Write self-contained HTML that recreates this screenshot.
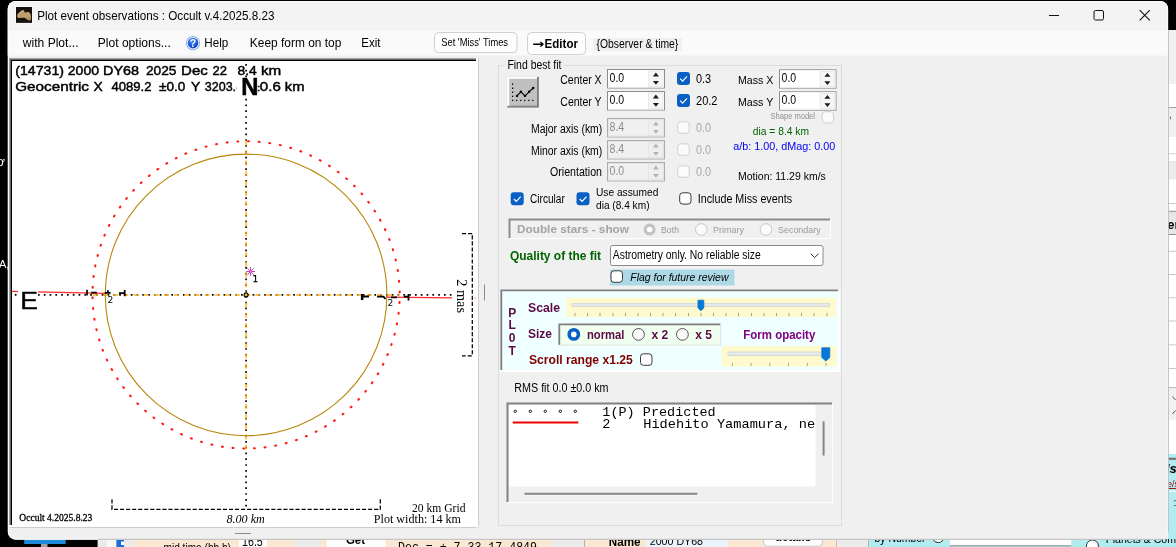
<!DOCTYPE html>
<html lang="en"><head><meta charset="utf-8"><title>Plot event observations : Occult v.4.2025.8.23</title>
<style>html,body{margin:0;padding:0;background:#000;overflow:hidden}svg{display:block;position:absolute;left:0;top:0;will-change:transform}text{white-space:pre}</style>
</head><body>
<svg width="1176" height="547" viewBox="0 0 1176 547">
<rect x="0" y="0" width="1176" height="547" fill="#000" />
<rect x="1160" y="30" width="16" height="517" fill="#f0f0f0" />
<rect x="1168" y="84" width="8" height="23.5" fill="#fff" />
<line x1="1168" y1="107.5" x2="1176" y2="107.5" stroke="#a0a0a0" stroke-width="1" />
<text x="1169" y="118" font-family="Liberation Sans, Arial, sans-serif" font-size="10" fill="#444" >,</text>
<rect x="1168" y="137" width="8" height="25" fill="#fff" />
<line x1="1168" y1="153.8" x2="1176" y2="153.8" stroke="#d0d0d0" stroke-width="1" />
<line x1="1168" y1="162" x2="1176" y2="162" stroke="#d0d0d0" stroke-width="1" />
<rect x="1168" y="162.5" width="8" height="17" fill="#ececec" />
<rect x="1168" y="179.5" width="8" height="32" fill="#fff" />
<line x1="1168" y1="203.5" x2="1176" y2="203.5" stroke="#c8c8c8" stroke-width="1" />
<rect x="1168" y="211" width="8" height="23.5" fill="#e6e6e6" />
<line x1="1168" y1="211.3" x2="1176" y2="211.3" stroke="#909090" stroke-width="1" />
<line x1="1168" y1="234.5" x2="1176" y2="234.5" stroke="#909090" stroke-width="1" />
<text x="1167.3" y="229" font-family="Liberation Sans, Arial, sans-serif" font-size="13" fill="#000" font-weight="bold" >er</text>
<rect x="1168" y="235" width="8" height="153" fill="#fff" />
<line x1="1168" y1="251.3" x2="1176" y2="251.3" stroke="#c8c8c8" stroke-width="1" />
<line x1="1168" y1="274.5" x2="1176" y2="274.5" stroke="#c8c8c8" stroke-width="1" />
<line x1="1168" y1="297.8" x2="1176" y2="297.8" stroke="#c8c8c8" stroke-width="1" />
<line x1="1168" y1="321" x2="1176" y2="321" stroke="#c8c8c8" stroke-width="1" />
<line x1="1168" y1="344.8" x2="1176" y2="344.8" stroke="#c8c8c8" stroke-width="1" />
<line x1="1168" y1="368.5" x2="1176" y2="368.5" stroke="#c8c8c8" stroke-width="1" />
<line x1="1168" y1="387.8" x2="1176" y2="387.8" stroke="#a0a0a0" stroke-width="1" />
<rect x="1168" y="388.3" width="8" height="32" fill="#f2f2f2" />
<path d="M1172.5 396.5 L1175.5 400" fill="none" stroke="#555" stroke-width="1" />
<path d="M1172.5 414 L1175.5 410.5" fill="none" stroke="#555" stroke-width="1" />
<rect x="1168" y="420" width="8" height="34" fill="#fff" />
<rect x="1168" y="454" width="8" height="93" fill="#b0ecf0" />
<line x1="1168" y1="458.8" x2="1176" y2="458.8" stroke="#707070" stroke-width="2" />
<line x1="1168" y1="491.3" x2="1176" y2="491.3" stroke="#fff" stroke-width="1" />
<text x="1166" y="473" font-family="Liberation Sans, Arial, sans-serif" font-size="13" fill="#000" font-weight="bold" font-style="italic" >ls</text>
<text x="1167" y="487" font-family="Liberation Sans, Arial, sans-serif" font-size="9" fill="#a00000" text-decoration="underline">e/s</text>
<text x="1173.5" y="506" font-family="Liberation Sans, Arial, sans-serif" font-size="10" fill="#000" >:</text>
<text x="-3" y="166" font-family="Liberation Sans, Arial, sans-serif" font-size="12" fill="#fff" >ơ</text>
<text x="-1" y="268" font-family="Liberation Sans, Arial, sans-serif" font-size="11" fill="#fff" >A,</text>
<rect x="0" y="539" width="98" height="9" fill="#000" />
<rect x="24.2" y="539" width="41.5" height="5" fill="#1f8ad8" />
<rect x="41" y="544" width="6.5" height="3" fill="#9aa0a6" />
<rect x="97.6" y="539" width="37" height="9" fill="#ebebeb" />
<rect x="107" y="539" width="9.5" height="9" fill="#f8f8f8" />
<rect x="116.4" y="539" width="7.6" height="9" fill="#1a6fd8" />
<rect x="121" y="541.5" width="3" height="3.5" fill="#fff" />
<rect x="133.9" y="539" width="418.1" height="9" fill="#fbe8d2" />
<rect x="238.8" y="539" width="28.2" height="9" fill="#fff" />
<rect x="294" y="539" width="25.8" height="9" fill="#ebebeb" />
<rect x="326.6" y="539" width="59" height="9" fill="#fdfdfd" />
<rect x="552" y="539" width="32.4" height="9" fill="#ebebeb" />
<rect x="584.4" y="539" width="252" height="9" fill="#fbe8d2" />
<rect x="646.5" y="539" width="81.8" height="9" fill="#eaf4fd" />
<rect x="763.5" y="535" width="59.2" height="11.2" fill="#fdfdfd" rx="4" stroke="#c8c8c8" stroke-width="1" />
<rect x="836.3" y="539" width="32.3" height="9" fill="#ebebeb" />
<rect x="868.5" y="539" width="308" height="9" fill="#b0ecf0" />
<rect x="949.8" y="539" width="121.4" height="6.5" fill="#fff" />
<line x1="949.8" y1="545.8" x2="1071.2" y2="545.8" stroke="#8a8a8a" stroke-width="1" />
<circle cx="1092.4" cy="546" r="6" fill="#fff" stroke="#333"/>
<circle cx="938.2" cy="536.8" r="5.8" fill="#fff" stroke="#333"/>
<clipPath id="cb"><rect x="0" y="539" width="1176" height="8"/></clipPath><g clip-path="url(#cb)">
<text x="163.5" y="551.6" font-family="Liberation Sans, Arial, sans-serif" font-size="12" fill="#000" textLength="67.5" lengthAdjust="spacingAndGlyphs" >mid time (hh.h)</text>
<text x="242" y="545.7" font-family="Liberation Sans, Arial, sans-serif" font-size="12" fill="#000" textLength="20.8" lengthAdjust="spacingAndGlyphs" >16.5</text>
<text x="346" y="543.6" font-family="Liberation Sans, Arial, sans-serif" font-size="13" fill="#000" font-weight="bold" textLength="19" lengthAdjust="spacingAndGlyphs" >Get</text>
<text x="398" y="550.6" font-family="Liberation Mono, Courier New, monospace" font-size="12.5" fill="#000" textLength="139" lengthAdjust="spacingAndGlyphs" >Dec = + 7 33 17.4849</text>
<text x="608.8" y="545.6" font-family="Liberation Sans, Arial, sans-serif" font-size="12" fill="#000" font-weight="bold" textLength="31.8" lengthAdjust="spacingAndGlyphs" >Name</text>
<text x="649.8" y="545.4" font-family="Liberation Sans, Arial, sans-serif" font-size="11.5" fill="#000" textLength="53.2" lengthAdjust="spacingAndGlyphs" >2000 DY68</text>
<text x="775" y="540.5" font-family="Liberation Sans, Arial, sans-serif" font-size="12" fill="#000" font-weight="bold" textLength="36" lengthAdjust="spacingAndGlyphs" >details</text>
<text x="874.5" y="541.6" font-family="Liberation Sans, Arial, sans-serif" font-size="13" fill="#000" textLength="51.0" lengthAdjust="spacingAndGlyphs" >by Number</text>
<text x="1105.7" y="543" font-family="Liberation Sans, Arial, sans-serif" font-size="11.5" fill="#000" textLength="84.36" lengthAdjust="spacingAndGlyphs" >Planets &amp; Comets</text>
<text x="953.5" y="539.6" font-family="Liberation Sans, Arial, sans-serif" font-size="9" fill="#000" textLength="18.5" lengthAdjust="spacingAndGlyphs" >1234</text>
</g>
<clipPath id="win"><rect x="7.7" y="1" width="1160.4" height="538.7" rx="8"/></clipPath>
<g clip-path="url(#win)">
<rect x="7" y="0" width="1162" height="540" fill="#f0f0f0" />
<rect x="7" y="0" width="1162" height="31" fill="#f3f3f3" />
<rect x="7" y="30.5" width="1162" height="25" fill="#fafafa" />
</g>
<rect x="8.5" y="1.5" width="1159" height="537.8" fill="none" rx="7.5" stroke="#ffffff" stroke-width="1" opacity="0.75"/>
<line x1="98" y1="539.4" x2="1162" y2="539.4" stroke="#c4c4c4" stroke-width="1.2" />
<line x1="1168.4" y1="30" x2="1168.4" y2="532" stroke="#c0c0c0" stroke-width="1" />
<rect x="16" y="7" width="16" height="16" fill="#15120e" />
<rect x="15.5" y="6.5" width="17" height="16.7" fill="none" stroke="#fff" stroke-width="1" opacity="0.4"/>
<path d="M17 16.2 C17.3 14.5 18 13.6 18.6 13.1 L20.8 11.3 C21.5 10.6 22 10.3 22.6 10.1 C23.3 10 23.7 10.2 23.9 10.6 L24.7 12.3 C25.3 12.6 26 12.5 26.5 12.3 C27.2 12 27.8 11.9 28.3 12 C29.2 12.3 29.7 12.8 30 13.3 C30.6 14 30.9 14.9 30.9 15.7 L30.9 19.2 C30.6 20 30.1 20.3 29.5 20.3 C28.7 20.3 28 20.1 27.4 19.7 L25.2 18.1 C24.5 17.8 23.7 17.7 23 17.7 L20.3 17.9 C19.5 18 18.7 17.9 18.1 17.7 C17.4 17.3 17 16.8 17 16.2 Z" fill="#bf9d6e" />
<path d="M25.4 18.2 L27.4 19.7 C28 20.1 28.7 20.3 29.5 20.3 C30.1 20.3 30.6 20 30.9 19.2 L30.9 16.5 C30 18 28 18.5 25.4 18.2 Z" fill="#a98659" />
<path d="M18.5 14.2 C20 12.5 21.5 11.3 23 11" fill="none" stroke="#d8b88c" stroke-width="0.9" />
<text x="37.2" y="20" font-family="Liberation Sans, Arial, sans-serif" font-size="12.2" fill="#000" textLength="237.3" lengthAdjust="spacingAndGlyphs" >Plot event observations : Occult v.4.2025.8.23</text>
<line x1="1049" y1="15.5" x2="1059" y2="15.5" stroke="#111" stroke-width="1" />
<rect x="1094" y="10.5" width="9.5" height="9.5" fill="none" rx="1.5" stroke="#111" stroke-width="1" />
<path d="M1139.7 10.2 L1149.8 20.3 M1149.8 10.2 L1139.7 20.3" fill="none" stroke="#111" stroke-width="1.1" />
<text x="22.8" y="47" font-family="Liberation Sans, Arial, sans-serif" font-size="12.2" fill="#000" textLength="55.7" lengthAdjust="spacingAndGlyphs" >with Plot...</text>
<text x="97.8" y="47" font-family="Liberation Sans, Arial, sans-serif" font-size="12.2" fill="#000" textLength="73.0" lengthAdjust="spacingAndGlyphs" >Plot options...</text>
<defs><radialGradient id="hg" cx="0.4" cy="0.3" r="0.8"><stop offset="0" stop-color="#4f8cf0"/><stop offset="0.55" stop-color="#1c5cd8"/><stop offset="1" stop-color="#0a36a8"/></radialGradient></defs>
<circle cx="193" cy="43.1" r="6.6" fill="#fff" stroke="#8eb0ee" stroke-width="1.1"/>
<circle cx="193" cy="43.1" r="5.3" fill="url(#hg)"/>
<text x="193" y="47" font-family="Liberation Sans, Arial, sans-serif" font-size="10.5" fill="#fff" font-weight="bold" text-anchor="middle">?</text>
<text x="204.3" y="47" font-family="Liberation Sans, Arial, sans-serif" font-size="12.2" fill="#000" textLength="24.0" lengthAdjust="spacingAndGlyphs" >Help</text>
<text x="249.8" y="47" font-family="Liberation Sans, Arial, sans-serif" font-size="12.2" fill="#000" textLength="91.5" lengthAdjust="spacingAndGlyphs" >Keep form on top</text>
<text x="361.3" y="47" font-family="Liberation Sans, Arial, sans-serif" font-size="12.2" fill="#000" textLength="19.2" lengthAdjust="spacingAndGlyphs" >Exit</text>
<rect x="434.5" y="32.5" width="82.5" height="20" fill="#fdfdfd" rx="4" stroke="#d0d0d0" stroke-width="1" />
<text x="441.3" y="45.8" font-family="Liberation Sans, Arial, sans-serif" font-size="10" fill="#000" textLength="66.7" lengthAdjust="spacingAndGlyphs" >Set 'Miss' Times</text>
<rect x="527.5" y="32.5" width="58" height="22" fill="#fdfdfd" rx="4" stroke="#d0d0d0" stroke-width="1" />
<text x="532.3" y="47.6" font-family="DejaVu Sans, Liberation Sans, sans-serif" font-size="12.5" fill="#000" font-weight="bold" textLength="12.0" lengthAdjust="spacingAndGlyphs" >→</text>
<text x="544.6" y="47.6" font-family="Liberation Sans, Arial, sans-serif" font-size="12.6" fill="#000" font-weight="bold" textLength="33.4" lengthAdjust="spacingAndGlyphs" >Editor</text>
<rect x="593" y="38" width="89" height="13" fill="#f0f0f0" />
<text x="596.5" y="48" font-family="Liberation Sans, Arial, sans-serif" font-size="12" fill="#000" textLength="81.8" lengthAdjust="spacingAndGlyphs" >{Observer &amp; time}</text>
<rect x="9" y="58" width="469.5" height="469.5" fill="#a0a0a0" />
<rect x="10" y="59" width="468.5" height="468.5" fill="#696969" />
<rect x="11" y="60" width="466.5" height="466.5" fill="#000" />
<rect x="476" y="58" width="2.5" height="469.5" fill="#fff" />
<rect x="9" y="525" width="469.5" height="2.5" fill="#fff" />
<rect x="477" y="58" width="1" height="469" fill="#e3e3e3" opacity="0"/>
<rect x="12" y="61" width="464.3" height="464.2" fill="#fff" />
<clipPath id="pp"><rect x="12" y="61" width="464.3" height="464.2"/></clipPath>
<g clip-path="url(#pp)">
<line x1="8.98" y1="294.9" x2="452" y2="294.9" stroke="#000" stroke-width="1.7" stroke-dasharray="1.7 4.1" />
<line x1="246.1" y1="58.15" x2="246.1" y2="509" stroke="#000" stroke-width="1.7" stroke-dasharray="1.7 4.1" />
<line x1="92.9" y1="294.9" x2="399" y2="294.9" stroke="#ffae1a" stroke-width="2" stroke-dasharray="5 5.15" opacity="0.72"/>
<line x1="246.1" y1="140.2" x2="246.1" y2="449.5" stroke="#ffae1a" stroke-width="2" stroke-dasharray="5 5.15" opacity="0.72"/>
<circle cx="246.1" cy="294.9" r="140.8" fill="none" stroke="#b8860b" stroke-width="1.1"/>
<circle cx="246.1" cy="294.9" r="153.6" fill="none" stroke="#ff1a1a" stroke-width="2.1" stroke-dasharray="0.9 9.82" stroke-linecap="round" transform="rotate(-89.3 246.1 294.9)"/>
<line x1="11" y1="291.4" x2="105.5" y2="293.4" stroke="#ff2a2a" stroke-width="1.2" />
<line x1="386" y1="297.2" x2="452" y2="297.8" stroke="#ff2a2a" stroke-width="1.3" />
<line x1="474" y1="298" x2="477" y2="298" stroke="#ff9a9a" stroke-width="1" />
<path d="M87 289.8 V295.6 M91.2 292.7 H96.8 M104.8 292.9 H110.6 M107.9 290.3 V293 M119 293.1 H125 M124.7 290.1 V296.2" fill="none" stroke="#000" stroke-width="1.7" />
<line x1="85.4" y1="293.5" x2="85.4" y2="295.6" stroke="#444" stroke-width="1" />
<path d="M362.4 294 V300 M362.3 296.5 H369 M377 296.7 H383.5 L385.5 299 M391 297.3 H397 M408.5 294 V300.6 M403.8 296.6 H408.5" fill="none" stroke="#000" stroke-width="1.8" />
<line x1="362" y1="294" x2="362" y2="300" stroke="#000" stroke-width="2.2" />
<rect x="18" y="288" width="20" height="24" fill="#fff" />
<text x="20.3" y="309" font-family="Liberation Sans, Arial, sans-serif" font-size="23.6" fill="#000" textLength="17.7" lengthAdjust="spacingAndGlyphs" stroke="#000" stroke-width="0.4">E</text>
<text x="107.6" y="302.8" font-family="DejaVu Sans, Liberation Sans, sans-serif" font-size="8.8" fill="#000" textLength="5.8" lengthAdjust="spacingAndGlyphs" >2</text>
<text x="387.4" y="306.4" font-family="DejaVu Sans, Liberation Sans, sans-serif" font-size="8.8" fill="#000" textLength="5.8" lengthAdjust="spacingAndGlyphs" >2</text>
<text x="252.6" y="282" font-family="DejaVu Sans, Liberation Sans, sans-serif" font-size="8.8" fill="#000" textLength="5.8" lengthAdjust="spacingAndGlyphs" stroke="#000" stroke-width="0.25">1</text>
<circle cx="246.1" cy="294.9" r="2" fill="#f5b743" stroke="#000" stroke-width="1.1"/>
<path d="M246.2 271.5 H255 M250.6 267 V276 M247.4 268.3 L253.8 274.7 M253.8 268.3 L247.4 274.7" fill="none" stroke="#b846b8" stroke-width="1.0" />
<circle cx="250.6" cy="271.5" r="1.5" fill="#f25fc0"/>
<text x="15.2" y="75" font-family="Liberation Sans, Arial, sans-serif" font-size="13.3" fill="#000" textLength="48.8" lengthAdjust="spacingAndGlyphs" stroke="#000" stroke-width="0.45">(14731)</text>
<text x="67.8" y="75" font-family="Liberation Sans, Arial, sans-serif" font-size="13.3" fill="#000" textLength="31.2" lengthAdjust="spacingAndGlyphs" stroke="#000" stroke-width="0.45">2000</text>
<text x="103" y="75" font-family="Liberation Sans, Arial, sans-serif" font-size="13.3" fill="#000" textLength="36" lengthAdjust="spacingAndGlyphs" stroke="#000" stroke-width="0.45">DY68</text>
<text x="146" y="75" font-family="Liberation Sans, Arial, sans-serif" font-size="13.3" fill="#000" textLength="30.5" lengthAdjust="spacingAndGlyphs" stroke="#000" stroke-width="0.45">2025</text>
<text x="181" y="75" font-family="Liberation Sans, Arial, sans-serif" font-size="13.3" fill="#000" textLength="26.8" lengthAdjust="spacingAndGlyphs" stroke="#000" stroke-width="0.45">Dec</text>
<text x="212.5" y="75" font-family="Liberation Sans, Arial, sans-serif" font-size="13.3" fill="#000" textLength="14.5" lengthAdjust="spacingAndGlyphs" stroke="#000" stroke-width="0.45">22</text>
<text x="237.5" y="75" font-family="Liberation Sans, Arial, sans-serif" font-size="13.3" fill="#000" textLength="19.3" lengthAdjust="spacingAndGlyphs" stroke="#000" stroke-width="0.45">8.4</text>
<text x="261" y="75" font-family="Liberation Sans, Arial, sans-serif" font-size="13.3" fill="#000" textLength="20.3" lengthAdjust="spacingAndGlyphs" stroke="#000" stroke-width="0.45">km</text>
<text x="15.2" y="90.5" font-family="Liberation Sans, Arial, sans-serif" font-size="13.3" fill="#000" textLength="73.8" lengthAdjust="spacingAndGlyphs" stroke="#000" stroke-width="0.45">Geocentric</text>
<text x="93.6" y="90.5" font-family="Liberation Sans, Arial, sans-serif" font-size="13.3" fill="#000" textLength="9.2" lengthAdjust="spacingAndGlyphs" stroke="#000" stroke-width="0.45">X</text>
<text x="111.5" y="90.5" font-family="Liberation Sans, Arial, sans-serif" font-size="13.3" fill="#000" textLength="40.0" lengthAdjust="spacingAndGlyphs" stroke="#000" stroke-width="0.45">4089.2</text>
<text x="159" y="90.5" font-family="Liberation Sans, Arial, sans-serif" font-size="13.3" fill="#000" textLength="26.3" lengthAdjust="spacingAndGlyphs" stroke="#000" stroke-width="0.45">±0.0</text>
<text x="191" y="90.5" font-family="Liberation Sans, Arial, sans-serif" font-size="13.3" fill="#000" textLength="9.3" lengthAdjust="spacingAndGlyphs" stroke="#000" stroke-width="0.45">Y</text>
<text x="204.8" y="90.5" font-family="Liberation Sans, Arial, sans-serif" font-size="13.3" fill="#000" textLength="38.2" lengthAdjust="spacingAndGlyphs" stroke="#000" stroke-width="0.45">3203.4</text>
<text x="251.5" y="90.5" font-family="Liberation Sans, Arial, sans-serif" font-size="13.3" fill="#000" textLength="29.3" lengthAdjust="spacingAndGlyphs" stroke="#000" stroke-width="0.45">±0.6</text>
<text x="284.8" y="90.5" font-family="Liberation Sans, Arial, sans-serif" font-size="13.3" fill="#000" textLength="19.7" lengthAdjust="spacingAndGlyphs" stroke="#000" stroke-width="0.45">km</text>
<rect x="236.3" y="77.4" width="21.5" height="18" fill="#fff" />
<text x="241.2" y="94.6" font-family="Liberation Sans, Arial, sans-serif" font-size="23.2" fill="#000" font-weight="bold" textLength="17.2" lengthAdjust="spacingAndGlyphs" stroke="#000" stroke-width="0.5">N</text>
<rect x="454.5" y="277" width="14" height="38" fill="#fff" />
<path d="M462 233.5 H472.3 V355.8 H462" fill="none" stroke="#000" stroke-width="1.25" stroke-dasharray="4.1 1.95"/>
<g transform="translate(457.2,279.2) rotate(90)">
<text x="0" y="0" font-family="Liberation Serif, Times New Roman, serif" font-size="14" fill="#000" textLength="33.8" lengthAdjust="spacingAndGlyphs" >2 mas</text>
</g>
<path d="M112 499.3 V509.4 H380.3 V499.3" fill="none" stroke="#000" stroke-width="1.25" stroke-dasharray="4.1 1.95"/>
<text x="19.3" y="520.6" font-family="Liberation Serif, Times New Roman, serif" font-size="10" fill="#000" textLength="73.0" lengthAdjust="spacingAndGlyphs" stroke="#000" stroke-width="0.3">Occult 4.2025.8.23</text>
<text x="226.5" y="522.6" font-family="Liberation Serif, Times New Roman, serif" font-size="12.3" fill="#000" font-style="italic" textLength="38.3" lengthAdjust="spacingAndGlyphs" >8.00 km</text>
<text x="412" y="512.1" font-family="Liberation Serif, Times New Roman, serif" font-size="12.3" fill="#000" textLength="53.5" lengthAdjust="spacingAndGlyphs" >20 km Grid</text>
<text x="373.8" y="522.7" font-family="Liberation Serif, Times New Roman, serif" font-size="12.3" fill="#000" textLength="87.2" lengthAdjust="spacingAndGlyphs" >Plot width: 14 km</text>
</g>
<line x1="484.5" y1="284.5" x2="484.5" y2="300.5" stroke="#8a8a8a" stroke-width="1" />
<line x1="235" y1="533.5" x2="251" y2="533.5" stroke="#8a8a8a" stroke-width="1" />
<rect x="498.5" y="65.5" width="343.0" height="460.0" fill="none" stroke="#dcdcdc" stroke-width="1" />
<rect x="504" y="58" width="60" height="13" fill="#f0f0f0" />
<text x="507.4" y="68.8" font-family="Liberation Sans, Arial, sans-serif" font-size="12" fill="#000" textLength="54.1" lengthAdjust="spacingAndGlyphs" >Find best fit</text>
<rect x="506.8" y="76.3" width="32" height="31.2" fill="#c0c0c0" />
<path d="M508 106.3 V77.5 H537.6" fill="none" stroke="#fff" stroke-width="2.4" />
<path d="M507.3 106.6 H537.9 V76.8" fill="none" stroke="#808080" stroke-width="1.9" />
<path d="M506.8 107.5 V76.3 H538.8" fill="none" stroke="#e8e8e8" stroke-width="0.8" />
<rect x="512.5" y="83.9" width="1.4" height="1.4" fill="#fff" />
<rect x="512" y="83.5" width="1.4" height="1.4" fill="#000" />
<rect x="512.5" y="87.97" width="1.4" height="1.4" fill="#fff" />
<rect x="512" y="87.57" width="1.4" height="1.4" fill="#000" />
<rect x="512.5" y="92.04" width="1.4" height="1.4" fill="#fff" />
<rect x="512" y="91.64" width="1.4" height="1.4" fill="#000" />
<rect x="512.5" y="96.11000000000001" width="1.4" height="1.4" fill="#fff" />
<rect x="512" y="95.71000000000001" width="1.4" height="1.4" fill="#000" />
<rect x="512.5" y="100.18" width="1.4" height="1.4" fill="#fff" />
<rect x="512" y="99.78" width="1.4" height="1.4" fill="#000" />
<rect x="516.55" y="100.2" width="1.4" height="1.4" fill="#fff" />
<rect x="516.05" y="99.8" width="1.4" height="1.4" fill="#000" />
<rect x="520.6" y="100.2" width="1.4" height="1.4" fill="#fff" />
<rect x="520.1" y="99.8" width="1.4" height="1.4" fill="#000" />
<rect x="524.65" y="100.2" width="1.4" height="1.4" fill="#fff" />
<rect x="524.15" y="99.8" width="1.4" height="1.4" fill="#000" />
<rect x="528.7" y="100.2" width="1.4" height="1.4" fill="#fff" />
<rect x="528.2" y="99.8" width="1.4" height="1.4" fill="#000" />
<rect x="532.75" y="100.2" width="1.4" height="1.4" fill="#fff" />
<rect x="532.25" y="99.8" width="1.4" height="1.4" fill="#000" />
<path d="M517 95.9 L520.9 91.8 L525 95.9 L529.1 91.8 L533.2 88" fill="none" stroke="#000" stroke-width="1.1" />
<circle cx="517" cy="95.9" r="1.2" fill="#000"/>
<circle cx="520.9" cy="91.8" r="1.2" fill="#000"/>
<circle cx="525" cy="95.9" r="1.2" fill="#000"/>
<circle cx="529.1" cy="91.8" r="1.2" fill="#000"/>
<circle cx="533.2" cy="88" r="1.2" fill="#000"/>
<text x="560.3" y="83.7" font-family="Liberation Sans, Arial, sans-serif" font-size="12" fill="#000" textLength="41.3" lengthAdjust="spacingAndGlyphs" >Center X</text>
<text x="560.3" y="105.7" font-family="Liberation Sans, Arial, sans-serif" font-size="12" fill="#000" textLength="41.3" lengthAdjust="spacingAndGlyphs" >Center Y</text>
<text x="531" y="133.2" font-family="Liberation Sans, Arial, sans-serif" font-size="12" fill="#000" textLength="71.3" lengthAdjust="spacingAndGlyphs" >Major axis (km)</text>
<text x="531" y="155" font-family="Liberation Sans, Arial, sans-serif" font-size="12" fill="#000" textLength="71.3" lengthAdjust="spacingAndGlyphs" >Minor axis (km)</text>
<text x="550" y="176.4" font-family="Liberation Sans, Arial, sans-serif" font-size="12" fill="#000" textLength="52" lengthAdjust="spacingAndGlyphs" >Orientation</text>
<rect x="607.5" y="69.5" width="57" height="18.5" fill="#fff" stroke="#8c8c8c" stroke-width="1" />
<rect x="608.5" y="70.5" width="55" height="16.5" fill="none" stroke="#fff" stroke-width="1" opacity="0.9"/>
<rect x="648.5" y="71" width="14.5" height="15.5" fill="#f6f6f6" stroke="#e0e0e0" stroke-width="0.6" />
<path d="M652.9 76.4 L655.9 72.6 L658.9 76.4 Z" fill="#1a1a1a" />
<path d="M652.9 80.9 L655.9 84.7 L658.9 80.9 Z" fill="#1a1a1a" />
<text x="609.6" y="82" font-family="Liberation Sans, Arial, sans-serif" font-size="12" fill="#000" textLength="14.6" lengthAdjust="spacingAndGlyphs" >0.0</text>
<rect x="607.5" y="91.5" width="57" height="18.5" fill="#fff" stroke="#8c8c8c" stroke-width="1" />
<rect x="608.5" y="92.5" width="55" height="16.5" fill="none" stroke="#fff" stroke-width="1" opacity="0.9"/>
<rect x="648.5" y="93" width="14.5" height="15.5" fill="#f6f6f6" stroke="#e0e0e0" stroke-width="0.6" />
<path d="M652.9 98.4 L655.9 94.6 L658.9 98.4 Z" fill="#1a1a1a" />
<path d="M652.9 102.9 L655.9 106.7 L658.9 102.9 Z" fill="#1a1a1a" />
<text x="609.6" y="104" font-family="Liberation Sans, Arial, sans-serif" font-size="12" fill="#000" textLength="14.6" lengthAdjust="spacingAndGlyphs" >0.0</text>
<rect x="607.5" y="118.5" width="57" height="18.5" fill="#f0f0f0" stroke="#ababab" stroke-width="1" />
<rect x="608.5" y="119.5" width="55" height="16.5" fill="none" stroke="#e4e4e4" stroke-width="1" opacity="0.9"/>
<rect x="648.5" y="120" width="14.5" height="15.5" fill="#efefef" stroke="#e0e0e0" stroke-width="0.6" />
<path d="M652.9 125.4 L655.9 121.6 L658.9 125.4 Z" fill="#b4b4b4" />
<path d="M652.9 129.9 L655.9 133.7 L658.9 129.9 Z" fill="#b4b4b4" />
<text x="609.6" y="131" font-family="Liberation Sans, Arial, sans-serif" font-size="12" fill="#8c8c8c" textLength="14.6" lengthAdjust="spacingAndGlyphs" >8.4</text>
<rect x="607.5" y="140.5" width="57" height="18.5" fill="#f0f0f0" stroke="#ababab" stroke-width="1" />
<rect x="608.5" y="141.5" width="55" height="16.5" fill="none" stroke="#e4e4e4" stroke-width="1" opacity="0.9"/>
<rect x="648.5" y="142" width="14.5" height="15.5" fill="#efefef" stroke="#e0e0e0" stroke-width="0.6" />
<path d="M652.9 147.4 L655.9 143.6 L658.9 147.4 Z" fill="#b4b4b4" />
<path d="M652.9 151.9 L655.9 155.7 L658.9 151.9 Z" fill="#b4b4b4" />
<text x="609.6" y="153" font-family="Liberation Sans, Arial, sans-serif" font-size="12" fill="#8c8c8c" textLength="14.6" lengthAdjust="spacingAndGlyphs" >8.4</text>
<rect x="607.5" y="162.5" width="57" height="18.5" fill="#f0f0f0" stroke="#ababab" stroke-width="1" />
<rect x="608.5" y="163.5" width="55" height="16.5" fill="none" stroke="#e4e4e4" stroke-width="1" opacity="0.9"/>
<rect x="648.5" y="164" width="14.5" height="15.5" fill="#efefef" stroke="#e0e0e0" stroke-width="0.6" />
<path d="M652.9 169.4 L655.9 165.6 L658.9 169.4 Z" fill="#b4b4b4" />
<path d="M652.9 173.9 L655.9 177.7 L658.9 173.9 Z" fill="#b4b4b4" />
<text x="609.6" y="175" font-family="Liberation Sans, Arial, sans-serif" font-size="12" fill="#8c8c8c" textLength="14.6" lengthAdjust="spacingAndGlyphs" >0.0</text>
<rect x="677" y="72" width="13" height="13" fill="#0a5fc4" rx="3" />
<path d="M680.2 78.7 L682.6 81.1 L687 76.4" fill="none" stroke="#fff" stroke-width="1.2" />
<text x="696" y="82.5" font-family="Liberation Sans, Arial, sans-serif" font-size="12" fill="#000" textLength="15.2" lengthAdjust="spacingAndGlyphs" >0.3</text>
<rect x="677" y="94" width="13" height="13" fill="#0a5fc4" rx="3" />
<path d="M680.2 100.7 L682.6 103.1 L687 98.4" fill="none" stroke="#fff" stroke-width="1.2" />
<text x="696" y="104.5" font-family="Liberation Sans, Arial, sans-serif" font-size="12" fill="#000" textLength="21.5" lengthAdjust="spacingAndGlyphs" >20.2</text>
<rect x="677.7" y="121.8" width="11.5" height="11.5" fill="#fbfbfb" rx="3" stroke="#cfcfcf" stroke-width="1" />
<text x="696" y="131.8" font-family="Liberation Sans, Arial, sans-serif" font-size="12" fill="#a8a8a8" textLength="15.2" lengthAdjust="spacingAndGlyphs" >0.0</text>
<rect x="677.7" y="143.8" width="11.5" height="11.5" fill="#fbfbfb" rx="3" stroke="#cfcfcf" stroke-width="1" />
<text x="696" y="153.8" font-family="Liberation Sans, Arial, sans-serif" font-size="12" fill="#a8a8a8" textLength="15.2" lengthAdjust="spacingAndGlyphs" >0.0</text>
<rect x="677.7" y="165.8" width="11.5" height="11.5" fill="#fbfbfb" rx="3" stroke="#cfcfcf" stroke-width="1" />
<text x="696" y="175.8" font-family="Liberation Sans, Arial, sans-serif" font-size="12" fill="#a8a8a8" textLength="15.2" lengthAdjust="spacingAndGlyphs" >0.0</text>
<text x="738" y="83.7" font-family="Liberation Sans, Arial, sans-serif" font-size="10.8" fill="#000" textLength="35.3" lengthAdjust="spacingAndGlyphs" >Mass X</text>
<text x="738" y="105.6" font-family="Liberation Sans, Arial, sans-serif" font-size="10.8" fill="#000" textLength="35.3" lengthAdjust="spacingAndGlyphs" >Mass Y</text>
<rect x="779.5" y="69.8" width="56.5" height="18.3" fill="#fff" stroke="#8c8c8c" stroke-width="1" />
<rect x="780.5" y="70.8" width="54.5" height="16.3" fill="none" stroke="#fff" stroke-width="1" opacity="0.9"/>
<rect x="820.0" y="71.3" width="14.5" height="15.3" fill="#f6f6f6" stroke="#e0e0e0" stroke-width="0.6" />
<path d="M824.4 76.7 L827.4 72.89999999999999 L830.4 76.7 Z" fill="#1a1a1a" />
<path d="M824.4 81.2 L827.4 85.0 L830.4 81.2 Z" fill="#1a1a1a" />
<text x="781.6" y="82.3" font-family="Liberation Sans, Arial, sans-serif" font-size="12" fill="#000" textLength="14.6" lengthAdjust="spacingAndGlyphs" >0.0</text>
<rect x="779.5" y="91.8" width="56.5" height="18.3" fill="#fff" stroke="#8c8c8c" stroke-width="1" />
<rect x="780.5" y="92.8" width="54.5" height="16.3" fill="none" stroke="#fff" stroke-width="1" opacity="0.9"/>
<rect x="820.0" y="93.3" width="14.5" height="15.3" fill="#f6f6f6" stroke="#e0e0e0" stroke-width="0.6" />
<path d="M824.4 98.7 L827.4 94.89999999999999 L830.4 98.7 Z" fill="#1a1a1a" />
<path d="M824.4 103.2 L827.4 107.0 L830.4 103.2 Z" fill="#1a1a1a" />
<text x="781.6" y="104.3" font-family="Liberation Sans, Arial, sans-serif" font-size="12" fill="#000" textLength="14.6" lengthAdjust="spacingAndGlyphs" >0.0</text>
<text x="770.5" y="118.9" font-family="Liberation Sans, Arial, sans-serif" font-size="8.3" fill="#8e8e8e" textLength="44.5" lengthAdjust="spacingAndGlyphs" >Shape model</text>
<rect x="822.2" y="111.7" width="11.3" height="11.3" fill="#fbfbfb" rx="3" stroke="#cfcfcf" stroke-width="1" />
<text x="752.8" y="135" font-family="Liberation Sans, Arial, sans-serif" font-size="11" fill="#006400" textLength="56.2" lengthAdjust="spacingAndGlyphs" >dia = 8.4 km</text>
<text x="733.3" y="149.6" font-family="Liberation Sans, Arial, sans-serif" font-size="11" fill="#0000f0" textLength="102.0" lengthAdjust="spacingAndGlyphs" >a/b: 1.00, dMag: 0.00</text>
<text x="738" y="179.6" font-family="Liberation Sans, Arial, sans-serif" font-size="11" fill="#000" textLength="87.8" lengthAdjust="spacingAndGlyphs" >Motion: 11.29 km/s</text>
<rect x="510.7" y="192.3" width="13" height="13" fill="#0a5fc4" rx="3" />
<path d="M513.9 199.0 L516.3 201.4 L520.7 196.70000000000002" fill="none" stroke="#fff" stroke-width="1.2" />
<text x="530" y="203.3" font-family="Liberation Sans, Arial, sans-serif" font-size="12" fill="#000" textLength="34.8" lengthAdjust="spacingAndGlyphs" >Circular</text>
<rect x="576.5" y="192.3" width="13" height="13" fill="#0a5fc4" rx="3" />
<path d="M579.7 199.0 L582.1 201.4 L586.5 196.70000000000002" fill="none" stroke="#fff" stroke-width="1.2" />
<text x="596" y="195.8" font-family="Liberation Sans, Arial, sans-serif" font-size="10.8" fill="#000" textLength="62.3" lengthAdjust="spacingAndGlyphs" >Use assumed</text>
<text x="596" y="208.7" font-family="Liberation Sans, Arial, sans-serif" font-size="10.8" fill="#000" textLength="53.5" lengthAdjust="spacingAndGlyphs" >dia (8.4 km)</text>
<rect x="679.7" y="192.8" width="11.3" height="11.3" fill="#fff" rx="3" stroke="#3a3a3a" stroke-width="1" />
<text x="697.8" y="202.8" font-family="Liberation Sans, Arial, sans-serif" font-size="12" fill="#000" textLength="94.2" lengthAdjust="spacingAndGlyphs" >Include Miss events</text>
<rect x="508.5" y="218.5" width="322" height="20" fill="#f0f0f0" />
<path d="M509.5 238.5 V219.5 H830.5" fill="none" stroke="#8c8c8c" stroke-width="2" />
<path d="M509 238.5 H830.5 V219" fill="none" stroke="#fff" stroke-width="1" />
<text x="517" y="232.8" font-family="Liberation Sans, Arial, sans-serif" font-size="11.5" fill="#a3a3a3" font-weight="bold" textLength="112" lengthAdjust="spacingAndGlyphs" >Double stars - show</text>
<circle cx="649.6" cy="229.5" r="4.4" fill="#fff" stroke="#c2c2c2" stroke-width="3.2"/>
<circle cx="701.3" cy="229.5" r="5.8" fill="#fbfbfb" stroke="#c6c6c6"/>
<circle cx="766" cy="229.5" r="5.8" fill="#fbfbfb" stroke="#c6c6c6"/>
<text x="661" y="233.3" font-family="Liberation Sans, Arial, sans-serif" font-size="9.3" fill="#9a9a9a" textLength="18" lengthAdjust="spacingAndGlyphs" >Both</text>
<text x="713" y="233.3" font-family="Liberation Sans, Arial, sans-serif" font-size="9.3" fill="#9a9a9a" textLength="31" lengthAdjust="spacingAndGlyphs" >Primary</text>
<text x="778" y="233.3" font-family="Liberation Sans, Arial, sans-serif" font-size="9.3" fill="#9a9a9a" textLength="42.7" lengthAdjust="spacingAndGlyphs" >Secondary</text>
<text x="510" y="259.6" font-family="Liberation Sans, Arial, sans-serif" font-size="12" fill="#006400" font-weight="bold" textLength="91" lengthAdjust="spacingAndGlyphs" >Quality of the fit</text>
<rect x="610.5" y="245.5" width="212.5" height="20" fill="#fff" rx="2" stroke="#8a8a8a" stroke-width="1" />
<text x="612.8" y="258.8" font-family="Liberation Sans, Arial, sans-serif" font-size="12" fill="#000" textLength="148.0" lengthAdjust="spacingAndGlyphs" >Astrometry only. No reliable size</text>
<path d="M810.7 253.7 L814.6 257.6 L818.5 253.7" fill="none" stroke="#333" stroke-width="1" />
<rect x="610" y="269.5" width="124.5" height="16" fill="#add8e6" />
<rect x="611.0" y="270.8" width="11.5" height="11.5" fill="#fff" rx="3" stroke="#3a3a3a" stroke-width="1" />
<text x="630.3" y="281.2" font-family="Liberation Sans, Arial, sans-serif" font-size="11" fill="#000" font-style="italic" textLength="98.2" lengthAdjust="spacingAndGlyphs" >Flag for future review</text>
<rect x="500.5" y="289.5" width="338" height="80.5" fill="#f0ffff" />
<path d="M501.3 370 V290.3 H838.5" fill="none" stroke="#7f7f7f" stroke-width="1.8" />
<rect x="500.5" y="370" width="339.7" height="1.9" fill="#fff" />
<rect x="838.3" y="289.5" width="1.9" height="82.4" fill="#fff" />
<text x="512.2" y="316.6" font-family="Liberation Sans, Arial, sans-serif" font-size="12" fill="#5c0a46" font-weight="bold" text-anchor="middle">P</text>
<text x="512.2" y="329.1" font-family="Liberation Sans, Arial, sans-serif" font-size="12" fill="#5c0a46" font-weight="bold" text-anchor="middle">L</text>
<text x="512.2" y="341.8" font-family="Liberation Sans, Arial, sans-serif" font-size="12" fill="#5c0a46" font-weight="bold" text-anchor="middle">0</text>
<text x="512.2" y="354.5" font-family="Liberation Sans, Arial, sans-serif" font-size="12" fill="#5c0a46" font-weight="bold" text-anchor="middle">T</text>
<text x="528" y="311.6" font-family="Liberation Sans, Arial, sans-serif" font-size="12" fill="#5c0a46" font-weight="bold" textLength="32" lengthAdjust="spacingAndGlyphs" >Scale</text>
<text x="528" y="337.8" font-family="Liberation Sans, Arial, sans-serif" font-size="12" fill="#5c0a46" font-weight="bold" textLength="24" lengthAdjust="spacingAndGlyphs" >Size</text>
<text x="529" y="363.6" font-family="Liberation Sans, Arial, sans-serif" font-size="12" fill="#800000" font-weight="bold" textLength="103.8" lengthAdjust="spacingAndGlyphs" >Scroll range x1.25</text>
<rect x="640.5" y="353.8" width="11.5" height="11.5" fill="#fff" rx="3" stroke="#3a3a3a" stroke-width="1" />
<rect x="566.5" y="297.8" width="269.2" height="19.2" fill="#fffacd" />
<rect x="572" y="303.3" width="257.5" height="3.3" fill="#e7eaea" stroke="#d0d0d0" stroke-width="0.7" />
<line x1="575.0" y1="313" x2="575.0" y2="316.2" stroke="#a4a494" stroke-width="1" />
<line x1="587.5" y1="313" x2="587.5" y2="316.2" stroke="#a4a494" stroke-width="1" />
<line x1="600.0" y1="313" x2="600.0" y2="316.2" stroke="#a4a494" stroke-width="1" />
<line x1="613.0" y1="313" x2="613.0" y2="316.2" stroke="#a4a494" stroke-width="1" />
<line x1="625.5" y1="313" x2="625.5" y2="316.2" stroke="#a4a494" stroke-width="1" />
<line x1="638.0" y1="313" x2="638.0" y2="316.2" stroke="#a4a494" stroke-width="1" />
<line x1="650.5" y1="313" x2="650.5" y2="316.2" stroke="#a4a494" stroke-width="1" />
<line x1="663.0" y1="313" x2="663.0" y2="316.2" stroke="#a4a494" stroke-width="1" />
<line x1="675.5" y1="313" x2="675.5" y2="316.2" stroke="#a4a494" stroke-width="1" />
<line x1="688.5" y1="313" x2="688.5" y2="316.2" stroke="#a4a494" stroke-width="1" />
<line x1="701.0" y1="313" x2="701.0" y2="316.2" stroke="#a4a494" stroke-width="1" />
<line x1="713.5" y1="313" x2="713.5" y2="316.2" stroke="#a4a494" stroke-width="1" />
<line x1="726.0" y1="313" x2="726.0" y2="316.2" stroke="#a4a494" stroke-width="1" />
<line x1="738.5" y1="313" x2="738.5" y2="316.2" stroke="#a4a494" stroke-width="1" />
<line x1="751.5" y1="313" x2="751.5" y2="316.2" stroke="#a4a494" stroke-width="1" />
<line x1="764.0" y1="313" x2="764.0" y2="316.2" stroke="#a4a494" stroke-width="1" />
<line x1="776.5" y1="313" x2="776.5" y2="316.2" stroke="#a4a494" stroke-width="1" />
<line x1="789.0" y1="313" x2="789.0" y2="316.2" stroke="#a4a494" stroke-width="1" />
<line x1="801.5" y1="313" x2="801.5" y2="316.2" stroke="#a4a494" stroke-width="1" />
<line x1="814.0" y1="313" x2="814.0" y2="316.2" stroke="#a4a494" stroke-width="1" />
<line x1="827.0" y1="313" x2="827.0" y2="316.2" stroke="#a4a494" stroke-width="1" />
<path d="M698 300.2 H703.8 V308 L700.9 310.8 L698 308 Z" fill="#0877d6" stroke="#0877d6" stroke-width="0.8" stroke-linejoin="round"/>
<rect x="558.5" y="323.5" width="162" height="21.5" fill="#f0fff0" />
<path d="M559.3 345 V324.3 H720.5" fill="none" stroke="#7f7f7f" stroke-width="1.8" />
<path d="M559 345.2 H720.7 V324" fill="none" stroke="#e2e2e2" stroke-width="1" />
<circle cx="573.8" cy="334.4" r="4.6" fill="#fff" stroke="#0a5fc4" stroke-width="3.6"/>
<text x="587" y="338.5" font-family="Liberation Sans, Arial, sans-serif" font-size="12" fill="#5c0a46" font-weight="bold" textLength="37.5" lengthAdjust="spacingAndGlyphs" >normal</text>
<circle cx="638.5" cy="334.4" r="5.9" fill="#fbfbfb" stroke="#555"/>
<text x="651.5" y="338.5" font-family="Liberation Sans, Arial, sans-serif" font-size="12" fill="#5c0a46" font-weight="bold" textLength="16.8" lengthAdjust="spacingAndGlyphs" xml:space="preserve">x 2</text>
<circle cx="682.4" cy="334.4" r="5.9" fill="#fbfbfb" stroke="#555"/>
<text x="695.3" y="338.5" font-family="Liberation Sans, Arial, sans-serif" font-size="12" fill="#5c0a46" font-weight="bold" textLength="16.7" lengthAdjust="spacingAndGlyphs" xml:space="preserve">x 5</text>
<text x="743.3" y="339" font-family="Liberation Sans, Arial, sans-serif" font-size="12" fill="#800080" font-weight="bold" textLength="72.0" lengthAdjust="spacingAndGlyphs" >Form opacity</text>
<rect x="721.8" y="346" width="114.5" height="20.5" fill="#fffacd" />
<rect x="728" y="352" width="101.5" height="3.6" fill="#e7eaea" stroke="#d0d0d0" stroke-width="0.7" />
<line x1="732.3" y1="362.8" x2="732.3" y2="366" stroke="#a4a494" stroke-width="1" />
<line x1="751.05" y1="362.8" x2="751.05" y2="366" stroke="#a4a494" stroke-width="1" />
<line x1="769.8" y1="362.8" x2="769.8" y2="366" stroke="#a4a494" stroke-width="1" />
<line x1="788.55" y1="362.8" x2="788.55" y2="366" stroke="#a4a494" stroke-width="1" />
<line x1="807.3" y1="362.8" x2="807.3" y2="366" stroke="#a4a494" stroke-width="1" />
<line x1="826.05" y1="362.8" x2="826.05" y2="366" stroke="#a4a494" stroke-width="1" />
<path d="M821.8 347.8 H829.8 V357.5 L825.8 361 L821.8 357.5 Z" fill="#0877d6" stroke="#0877d6" stroke-width="0.8" stroke-linejoin="round"/>
<text x="514.3" y="392" font-family="Liberation Sans, Arial, sans-serif" font-size="12" fill="#000" textLength="94.2" lengthAdjust="spacingAndGlyphs" >RMS fit 0.0 ±0.0 km</text>
<rect x="506.5" y="402.5" width="326" height="100" fill="#f0f0f0" />
<rect x="508.5" y="404.5" width="307" height="82" fill="#fff" rx="2" />
<path d="M507.5 502.5 V403.5 H832.5" fill="none" stroke="#828282" stroke-width="2" />
<path d="M506.5 502.5 H832.5 V402.5" fill="none" stroke="#fff" stroke-width="1" />
<circle cx="515.3" cy="411.3" r="1.2" fill="#fff" stroke="#000" stroke-width="0.9"/>
<circle cx="530.3" cy="411.3" r="1.2" fill="#fff" stroke="#000" stroke-width="0.9"/>
<circle cx="545.3" cy="411.3" r="1.2" fill="#fff" stroke="#000" stroke-width="0.9"/>
<circle cx="560.3" cy="411.3" r="1.2" fill="#fff" stroke="#000" stroke-width="0.9"/>
<circle cx="575.3" cy="411.3" r="1.2" fill="#fff" stroke="#000" stroke-width="0.9"/>
<line x1="512.7" y1="422.6" x2="578.3" y2="422.6" stroke="#f00000" stroke-width="2" />
<text x="602.3" y="415.6" font-family="Liberation Mono, Courier New, monospace" font-size="12.2" fill="#000" textLength="113.4" lengthAdjust="spacingAndGlyphs" xml:space="preserve">1(P) Predicted</text>
<text x="602.3" y="428" font-family="Liberation Mono, Courier New, monospace" font-size="12.2" fill="#000" textLength="212.88" lengthAdjust="spacingAndGlyphs" xml:space="preserve">2    Hidehito Yamamura, ne</text>
<line x1="823.6" y1="421.3" x2="823.6" y2="455.5" stroke="#868686" stroke-width="2" />
<line x1="524.5" y1="493.8" x2="697.3" y2="493.8" stroke="#868686" stroke-width="2" />
</svg>
</body></html>
